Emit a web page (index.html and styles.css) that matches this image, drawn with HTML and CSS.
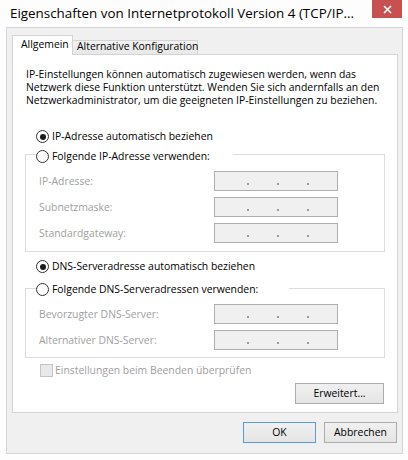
FILE: index.html
```html
<!DOCTYPE html>
<html lang="de">
<head>
<meta charset="utf-8">
<title>Eigenschaften von Internetprotokoll Version 4 (TCP/IPv4)</title>
<link rel="stylesheet" href="styles.css">
</head>
<body>
<div class="window">
  <div class="titlebar">
    <span class="title">Eigenschaften von Internetprotokoll Version 4 (TCP/IP...</span>
    <div class="close">
      <svg width="9" height="9" viewBox="0 0 9 9"><path d="M1 1 L8 8 M8 1 L1 8" stroke="#fff" stroke-width="1.6" fill="none"/></svg>
    </div>
  </div>
  <div class="client">
    <div class="tabs">
      <div class="tab active">Allgemein</div>
      <div class="tab">Alternative Konfiguration</div>
    </div>
    <div class="panel">
      <p class="intro">IP-Einstellungen können automatisch zugewiesen werden, wenn das<br>Netzwerk diese Funktion unterstützt. Wenden Sie sich andernfalls an den<br>Netzwerkadministrator, um die geeigneten IP-Einstellungen zu beziehen.</p>

      <div class="option"><span class="radio checked"></span><span>IP-Adresse automatisch beziehen</span></div>
      <div class="group group-ip">
        <div class="legend legend-ip"><span class="radio"></span><span>Folgende IP-Adresse verwenden:</span></div>
        <div class="field"><span class="label">IP-Adresse:</span><span class="ipbox"><i></i><i></i><i></i></span></div>
        <div class="field"><span class="label">Subnetzmaske:</span><span class="ipbox"><i></i><i></i><i></i></span></div>
        <div class="field"><span class="label">Standardgateway:</span><span class="ipbox"><i></i><i></i><i></i></span></div>
      </div>

      <div class="option option-dns"><span class="radio checked"></span><span>DNS-Serveradresse automatisch beziehen</span></div>
      <div class="group group-dns">
        <div class="legend legend-dns"><span class="radio"></span><span>Folgende DNS-Serveradressen verwenden:</span></div>
        <div class="field"><span class="label">Bevorzugter DNS-Server:</span><span class="ipbox"><i></i><i></i><i></i></span></div>
        <div class="field"><span class="label">Alternativer DNS-Server:</span><span class="ipbox"><i></i><i></i><i></i></span></div>
      </div>

      <div class="check-row"><span class="check"></span><span class="disabled">Einstellungen beim Beenden überprüfen</span></div>
      <div class="adv-row"><button class="btn btn-adv">Erweitert...</button></div>
    </div>
    <div class="dialog-buttons">
      <button class="btn btn-default">OK</button>
      <button class="btn">Abbrechen</button>
    </div>
  </div>
</div>
</body>
</html>
```
FILE: styles.css
```css
* { box-sizing: border-box; }

html, body {
  margin: 0;
  padding: 0;
}

body {
  width: 408px;
  height: 460px;
  background: #fdfdfd;
  font-family: "Open Sans", "Noto Sans", sans-serif;
  font-size: 10.4px;
  color: #000;
  overflow: hidden;
}

.window {
  display: flex;
  flex-direction: column;
  padding: 0 5px 0 6px;
}

.titlebar {
  height: 27px;
  display: flex;
  justify-content: space-between;
  align-items: flex-start;
}

.title {
  font-size: 13.4px;
  line-height: 26px;
  padding-left: 4px;
  color: #000;
  white-space: nowrap;
}

.close {
  width: 30px;
  height: 18px;
  margin-right: 1px;
  background: #c75050;
  display: flex;
  align-items: center;
  justify-content: center;
}

.client {
  height: 427px;
  border: 1px solid #d6d6d6;
  background: #f0f0f0;
  padding: 7px 4px 0 5px;
}

.tabs {
  display: flex;
  align-items: flex-end;
  height: 20px;
  margin-bottom: -1px;
  position: relative;
  z-index: 1;
}

.tab {
  white-space: nowrap;
}

.tab.active {
  width: 61px;
  height: 20px;
  border: 1px solid #d4d4d4;
  border-bottom: none;
  background: #fff;
  padding-left: 8px;
  line-height: 17px;
}

.tab:not(.active) {
  width: 125px;
  height: 14px;
  margin-bottom: 1px;
  border: 1px solid #d4d4d4;
  border-left: none;
  border-bottom: none;
  background: linear-gradient(#f2f2f2, #e8e8e8);
  padding-left: 4px;
  line-height: 10px;
}

.panel {
  height: 359px;
  border: 1px solid #d4d4d4;
  background: #fff;
  padding-top: 13px;
}

.intro {
  margin: 0;
  padding: 0 0 0 13px;
  line-height: 13px;
  white-space: nowrap;
}

.option {
  display: flex;
  align-items: center;
  height: 17px;
  line-height: 17px;
  margin-top: 21px;
  padding-left: 23px;
  gap: 3px;
}

.option-dns {
  margin-top: 6px;
}

.radio {
  width: 13px;
  height: 13px;
  border: 1px solid #333;
  border-radius: 50%;
  background: #fff;
  display: flex;
  align-items: center;
  justify-content: center;
  flex: none;
}

.radio.checked::after {
  content: "";
  width: 6px;
  height: 6px;
  border-radius: 50%;
  background: #1a1a1a;
}

.group {
  margin: 9px 12px 0 12px;
  border: 1px solid #dcdcdc;
  padding: 0 0 8px 13px;
}

.group-dns {
  margin-top: 13px;
  padding-bottom: 7px;
}

.legend {
  display: flex;
  align-items: center;
  height: 17px;
  line-height: 17px;
  margin-top: -7px;
  margin-left: -3px;
  gap: 3px;
  background: #fff;
  white-space: nowrap;
}

.legend-ip { width: 197px; }

.legend-dns {
  width: 253px;
  margin-top: -8px;
}

.field {
  display: flex;
  align-items: center;
  height: 20px;
  margin-top: 6px;
}

.label {
  width: 175px;
  color: #a0a0a0;
  white-space: nowrap;
}

.ipbox {
  width: 124px;
  height: 20px;
  border: 1px solid #b0b0b0;
  background: #f0f0f0;
  display: flex;
  align-items: flex-start;
  padding: 11px 0 0 32px;
  gap: 28px;
}

.ipbox i {
  display: block;
  width: 2px;
  height: 2px;
  background: #9a9a9a;
}

.check-row {
  display: flex;
  align-items: center;
  height: 17px;
  line-height: 17px;
  margin-top: 4px;
  padding-left: 27px;
  gap: 2px;
}

.check {
  width: 13px;
  height: 13px;
  border: 1px solid #c4c4c4;
  background: #e9e9e9;
  flex: none;
}

.disabled { color: #a0a0a0; }

.adv-row {
  display: flex;
  justify-content: flex-end;
  margin-top: 4px;
  padding-right: 13px;
}

.btn {
  font-family: inherit;
  font-size: inherit;
  color: #000;
  width: 73px;
  height: 21px;
  margin: 0;
  padding: 0;
  border: 1px solid #acacac;
  border-radius: 0;
  background: linear-gradient(#f0f0f0, #e5e5e5);
  line-height: 19px;
  text-align: center;
}

.btn-adv { width: 89px; }

.btn-default { border-color: #5a9bd5; }

.dialog-buttons {
  display: flex;
  justify-content: flex-end;
  gap: 8px;
  margin-top: 9px;
  padding-right: 1px;
}
```
